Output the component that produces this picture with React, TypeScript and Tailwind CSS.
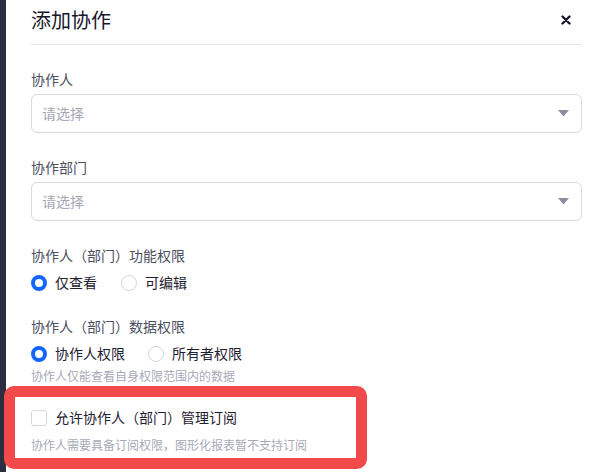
import React from "react";

const font = { fontFamily: '"Noto Sans CJK SC", "Noto Sans", sans-serif' };

const Select: React.FC = () => (
  <div className="flex h-[39px] items-center justify-between rounded-[6px] border border-[#d9d9e6] bg-white pl-[10px] pr-[12px]">
    <span className="text-[14px] text-[#a5a7b5]">请选择</span>
    <svg width="11" height="7" viewBox="0 0 11 7">
      <path d="M0 0 H11 L5.5 6.5 Z" fill="#8b8e9c" />
    </svg>
  </div>
);

const Radio: React.FC<{ checked?: boolean; label: string }> = ({ checked, label }) => (
  <label className="flex items-center gap-[8px]">
    {checked ? (
      <span className="box-border h-[16px] w-[16px] rounded-full border-[4.5px] border-[#1464ff] bg-white" />
    ) : (
      <span className="box-border h-[16px] w-[16px] rounded-full border border-[#d5d6e2] bg-white" />
    )}
    <span className="text-[14px] text-[#1e2030]">{label}</span>
  </label>
);

const App: React.FC = () => {
  return (
    <div className="relative flex h-[472px] w-[602px] overflow-hidden bg-white" style={font}>
      <div className="w-[6px] shrink-0 bg-[#2a2e40]" />
      <div className="flex-1 pl-[25px] pr-[20px]">
        <div className="flex h-[45px] items-center justify-between border-b border-[#e4e4ee] pb-[4px]">
          <h1 className="text-[20px] text-[#16182a]">添加协作</h1>
          <svg width="10" height="10" viewBox="0 0 10 10" className="mr-[11px]">
            <path d="M1.5 1.5 L8.5 8.5 M8.5 1.5 L1.5 8.5" stroke="#16182a" strokeWidth="2.4" strokeLinecap="round" />
          </svg>
        </div>

        <div className="mt-[24px] text-[14px] text-[#4b4e5e]">协作人</div>
        <div className="mt-[4px]">
          <Select />
        </div>

        <div className="mt-[24px] text-[14px] text-[#4b4e5e]">协作部门</div>
        <div className="mt-[4px]">
          <Select />
        </div>

        <div className="mt-[24px] text-[14px] text-[#4b4e5e]">协作人（部门）功能权限</div>
        <div className="mt-[6px] flex gap-[24px]">
          <Radio checked label="仅查看" />
          <Radio label="可编辑" />
        </div>

        <div className="mt-[23px] text-[14px] text-[#4b4e5e]">协作人（部门）数据权限</div>
        <div className="mt-[6px] flex gap-[23px]">
          <Radio checked label="协作人权限" />
          <Radio label="所有者权限" />
        </div>
        <div className="mt-[3px] text-[12px] text-[#a7a9b8]">协作人仅能查看自身权限范围内的数据</div>

        <div className="mt-[22px] flex items-center gap-[8px]">
          <span className="box-border h-[16px] w-[16px] rounded-[3px] border border-[#d5d6e2] bg-white" />
          <span className="text-[14px] text-[#1e2030]">允许协作人（部门）管理订阅</span>
        </div>
        <div className="mt-[8px] text-[12px] text-[#a7a9b8]">协作人需要具备订阅权限，图形化报表暂不支持订阅</div>
      </div>

      <div className="pointer-events-none absolute left-[4px] top-[386px] h-[83px] w-[363px] rounded-[10px] border-[11px] border-[#f24a4a]" />
    </div>
  );
};

export default App;
